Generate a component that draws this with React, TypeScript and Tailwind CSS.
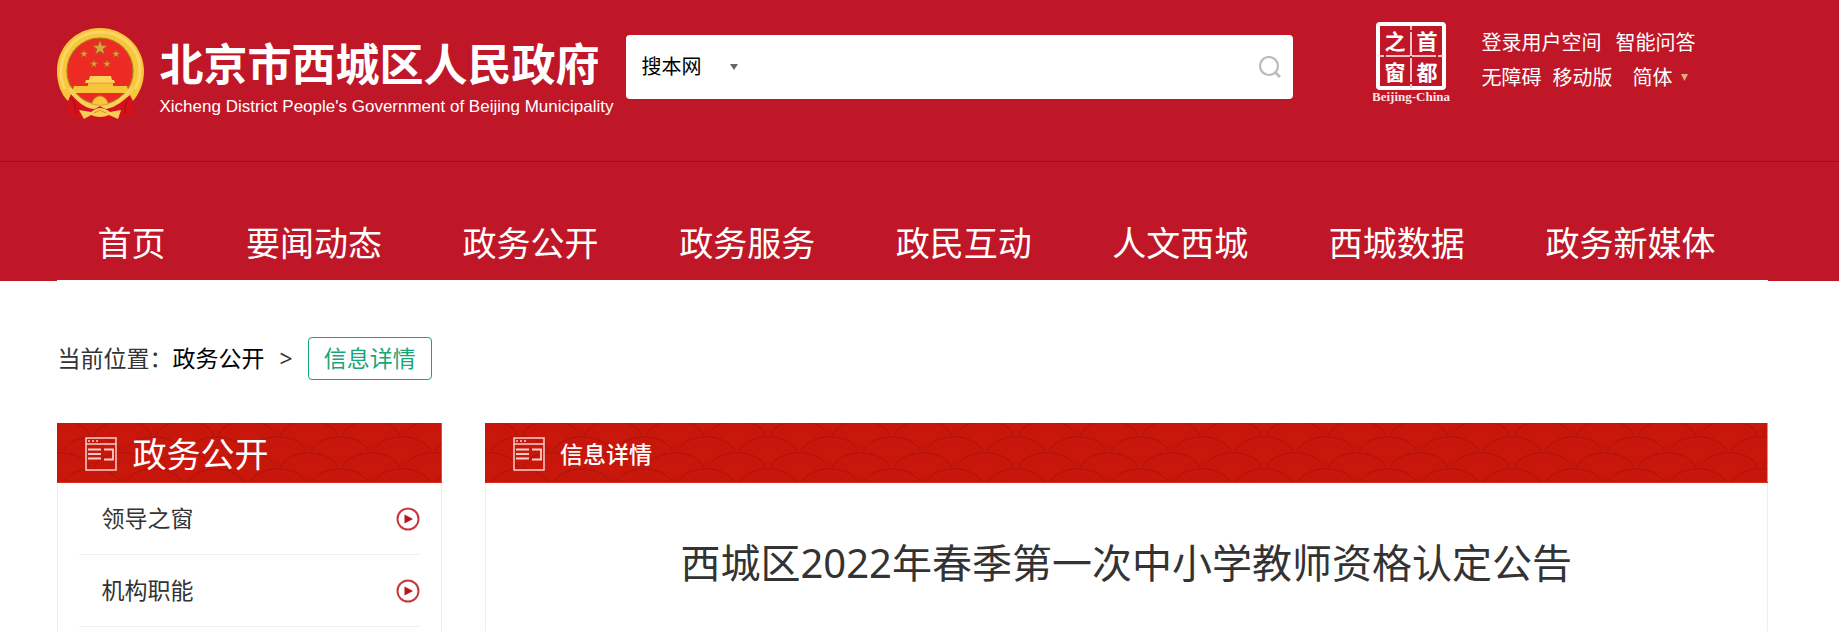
import { useId } from "react";

const nav = [
  "首页",
  "要闻动态",
  "政务公开",
  "政务服务",
  "政民互动",
  "人文西城",
  "西城数据",
  "政务新媒体",
];

const menu = ["领导之窗", "机构职能"];

const star = (cx: number, cy: number, r: number) =>
  Array.from({ length: 10 }, (_, i) => {
    const a = (Math.PI / 5) * i - Math.PI / 2;
    const d = i % 2 ? r * 0.4 : r;
    return `${cx + d * Math.cos(a)},${cy + d * Math.sin(a)}`;
  }).join(" ");

const Emblem = () => (
  <svg width="88" height="93" viewBox="0 0 88 93" className="shrink-0" aria-hidden="true">
    <path d="M12 62 L10 86 Q18 90 27 90 Q43 93 59 90 Q68 90 76 86 L75 64 Z" fill="#d5121b" />
    <path d="M14 70 Q20 78 18 86 M72 70 Q66 78 69 86" stroke="#b80f19" strokeWidth="2" fill="none" />
    <path
      d="M43 0 C67 0 87 19 87 43 C87 56 82 66 76 73 L73 67 Q58 80 49 78 L43 76 L37 78 Q26 79 14 66 L11 73 C4 66 0 56 0 43 C0 19 19 0 43 0Z"
      fill="#f9c63a"
    />
    <path
      d="M8 61 Q3 51 4 42 C5 20 22 4 43 4 C65 4 83 20 83 42 Q83 53 78 61"
      fill="none"
      stroke="#fbd568"
      strokeWidth="3"
    />
    <circle cx="43" cy="43" r="33" fill="#ee2a24" stroke="#a97b1c" strokeWidth="1.2" />
    <polygon points={star(43, 20, 8)} fill="#d9a83a" stroke="#8f5c1c" strokeWidth="0.6" />
    <polygon points={star(27, 26, 4)} fill="#d6a437" stroke="#a9681c" strokeWidth="0.4" />
    <polygon points={star(59, 26, 4)} fill="#d6a437" stroke="#a9681c" strokeWidth="0.4" />
    <polygon points={star(37, 36, 4)} fill="#d6a437" stroke="#a9681c" strokeWidth="0.4" />
    <polygon points={star(50, 36, 4)} fill="#d6a437" stroke="#a9681c" strokeWidth="0.4" />
    <path d="M33 48 H54 L55 52 H57 L58 55 H28 L29 52 H32Z" fill="#fbd35a" />
    <path d="M31 55 H56 V58 H70 L72 65 H15 L17 58 H31Z" fill="#f8c43a" />
    <path d="M31 55 H56" stroke="#dd9a2b" strokeWidth="0.8" />
    <path d="M12 60 Q25 78 37 79 L43 76 L49 79 Q62 77 75 60" fill="none" stroke="#f7cf5c" strokeWidth="4" />
    <path d="M35 76 Q36 69 43 68 Q50 69 51 76 Q43 79 35 76Z" fill="#f8c53e" stroke="#d88b24" strokeWidth="0.7" />
    <path d="M22 82 L34 84 Q39 80 43 80 Q48 80 53 84 L64 82 L61 91 L52 87 Q43 91 34 87 L27 91Z" fill="#f7cd58" />
    <path d="M37 85 L43 82 L49 85" fill="none" stroke="#ce8326" strokeWidth="0.8" />
  </svg>
);

const SealLogo = () => (
  <svg width="78" height="82" viewBox="0 0 78 82" role="img" aria-label="首都之窗">
    <rect x="5" y="2" width="66" height="64" rx="2" fill="none" stroke="#fff" strokeWidth="4" />
    <path d="M38 4 V66 M7 34 H70" stroke="#f3c4c9" strokeWidth="2" strokeDasharray="24 2" strokeDashoffset="20" />
    <g fill="#fff" fontFamily="'Noto Sans CJK SC', sans-serif" fontWeight="700" fontSize="21" textAnchor="middle">
      <text x="22" y="27">之</text>
      <text x="54" y="27">首</text>
      <text x="22" y="58">窗</text>
      <text x="54" y="58">都</text>
    </g>
    <text x="38" y="79" fill="#fbe5e7" fontFamily="'Liberation Serif', serif" fontWeight="700" fontSize="13" textAnchor="middle">
      Beijing-China
    </text>
  </svg>
);

const domes = [
  [0, -4],
  [62, -4],
  [31, 12],
  [0, 28],
  [62, 28],
  [31, 44],
];

const Waves = () => {
  const id = useId();
  return (
    <svg className="absolute inset-0 h-full w-full" aria-hidden="true">
      <pattern id={id} width="62" height="32" patternUnits="userSpaceOnUse" x="4" y="12">
        <rect width="62" height="32" fill="#c9150a" />
        {domes.map(([x, y]) => (
          <g key={`${x}-${y}`} fill="none">
            <ellipse cx={x} cy={y + 8} rx="31" ry="20" fill="#ca170c" />
            <ellipse cx={x} cy={y + 8} rx="29" ry="18" stroke="#b91409" strokeWidth="2" />
            <ellipse cx={x} cy={y + 8} rx="24" ry="14" stroke="#c3140a" />
            <ellipse cx={x} cy={y + 8} rx="20" ry="11" stroke="#c3140a" />
            <ellipse cx={x} cy={y + 8} rx="16" ry="8" stroke="#c3140a" />
          </g>
        ))}
      </pattern>
      <rect width="100%" height="100%" fill={`url(#${id})`} />
    </svg>
  );
};

const PageIcon = () => (
  <svg width="32" height="34" viewBox="0 0 32 34" fill="none" stroke="#f6cfcb" aria-hidden="true">
    <rect x="1" y="1" width="30" height="32" strokeWidth="1.5" />
    <path d="M1 7 H31" strokeWidth="1.5" />
    <path d="M3 4 H5 M7 4 H9 M11 4 H13" strokeWidth="1.5" />
    <path d="M3 12.5 H16 M3 17 H16 M3 21.5 H16 M19 12.5 H28 V22.5 H19" strokeWidth="1.8" />
  </svg>
);

const PlayIcon = () => (
  <svg width="24" height="24" viewBox="0 0 24 24" aria-hidden="true">
    <circle cx="12" cy="12" r="10.5" fill="none" stroke="#c8373b" strokeWidth="2" />
    <path d="M8.5 7.5 L17 12 L8.5 16.5Z" fill="#b91419" />
  </svg>
);

const Header = () => (
  <header className="bg-[#bf1728] text-white">
    <div className="border-b border-[#9b1020] pr-3.5">
      <div className="mx-auto flex h-[161px] w-[93.7%] items-start">
        <a href="#" className="mt-7 flex w-[569px] shrink-0 gap-[14px]">
          <Emblem />
          <div className="whitespace-nowrap">
            <div className="mt-2 text-[44px] leading-[56px] font-bold">北京市西城区人民政府</div>
            <div className="mt-[5px] font-['Liberation_Sans',Arial,sans-serif] text-[17px] leading-5">
              Xicheng District People's Government of Beijing Municipality
            </div>
          </div>
        </a>
        <form className="mt-[35px] flex h-16 min-w-0 flex-1 items-center rounded bg-white px-3 text-black">
          <div className="relative flex shrink-0 items-center">
            <select aria-label="搜索范围" className="w-[104px] appearance-none bg-transparent pl-[3px] text-[20px] outline-none">
              <option>搜本网</option>
            </select>
            <svg width="8" height="6" viewBox="0 0 8 6" className="pointer-events-none absolute right-1" aria-hidden="true">
              <path d="M0 0 H8 L4 6Z" fill="#666" />
            </svg>
          </div>
          <input type="text" aria-label="搜索" className="min-w-0 flex-1 px-3 text-[20px] outline-none" />
          <button type="submit" aria-label="搜索">
            <svg width="22" height="22" viewBox="0 0 22 22" fill="none" stroke="#bbb" strokeWidth="2.2">
              <circle cx="10" cy="10" r="9" />
              <path d="M16 16 L21 21" strokeWidth="2.6" />
            </svg>
          </button>
        </form>
        <a href="#" className="mt-[22px] ml-20 shrink-0">
          <SealLogo />
        </a>
        <div className="mt-[25px] ml-[31px] w-[286px] shrink-0 text-[20px] leading-[35px]">
          <div className="flex gap-[14px]">
            <a href="#">登录用户空间</a>
            <a href="#">智能问答</a>
          </div>
          <div className="flex items-center">
            <a href="#">无障碍</a>
            <a href="#" className="ml-[11px]">移动版</a>
            <button type="button" className="ml-5 flex items-center gap-2">
              简体
              <svg width="7" height="7" viewBox="0 0 7 7" aria-hidden="true">
                <path d="M0 0 H7 L3.5 7Z" fill="#dcb078" />
              </svg>
            </button>
          </div>
        </div>
      </div>
    </div>
    <div className="pr-3.5">
      <nav className="mx-auto flex h-[119px] w-[93.7%] items-end justify-between border-b border-white pr-3">
        {nav.map((el) => (
          <a key={el} href="#" className="px-10 pb-3 text-[34px] leading-[50px] whitespace-nowrap">
            {el}
          </a>
        ))}
      </nav>
    </div>
  </header>
);

const Breadcrumb = () => (
  <div className="flex items-center pt-14 text-[23px] leading-[41px] text-[#333]">
    <span>当前位置：</span>
    <a href="#" className="text-black">政务公开</a>
    <span className="mx-[15px]">&gt;</span>
    <a href="#" className="rounded border border-[#18a57b] px-[15px] text-[#18a57b]">
      信息详情
    </a>
  </div>
);

const App = () => {
  return (
    <div className="bg-white font-['Noto_Sans','Noto_Sans_CJK_SC',sans-serif]">
      <Header />
      <div className="pr-3.5">
        <main className="mx-auto w-[93.7%]">
          <Breadcrumb />
          <div className="mt-[43px] flex items-stretch justify-between">
            <aside className="w-[22.5%]">
              <div className="relative h-[60px] border-b border-[#d5301f]">
                <Waves />
                <h2 className="relative flex h-full items-center gap-[15px] px-7 pt-[3px] text-[34px] text-white">
                  <PageIcon />
                  政务公开
                </h2>
              </div>
              <ul className="border-x border-[#eee] px-[21px] pb-1">
                {menu.map((el) => (
                  <li key={el} className="border-b border-[#eee]">
                    <a href="#" className="flex h-[71px] items-center justify-between pl-[22px] text-[23px] text-[#333]">
                      {el}
                      <PlayIcon />
                    </a>
                  </li>
                ))}
              </ul>
            </aside>
            <section className="flex w-[75%] flex-col">
              <div className="relative h-[60px] border-b border-[#d5301f]">
                <Waves />
                <h2 className="relative flex h-full items-center gap-[15px] px-7 pt-[3px] text-[23px] font-medium text-white">
                  <PageIcon />
                  信息详情
                </h2>
              </div>
              <div className="flex-1 border-x border-[#eee] px-5 pt-[50px]">
                <h1 className="text-center text-[40px] leading-[60px] text-[#333]">
                  西城区2022年春季第一次中小学教师资格认定公告
                </h1>
              </div>
            </section>
          </div>
        </main>
      </div>
    </div>
  );
};

export default App;
